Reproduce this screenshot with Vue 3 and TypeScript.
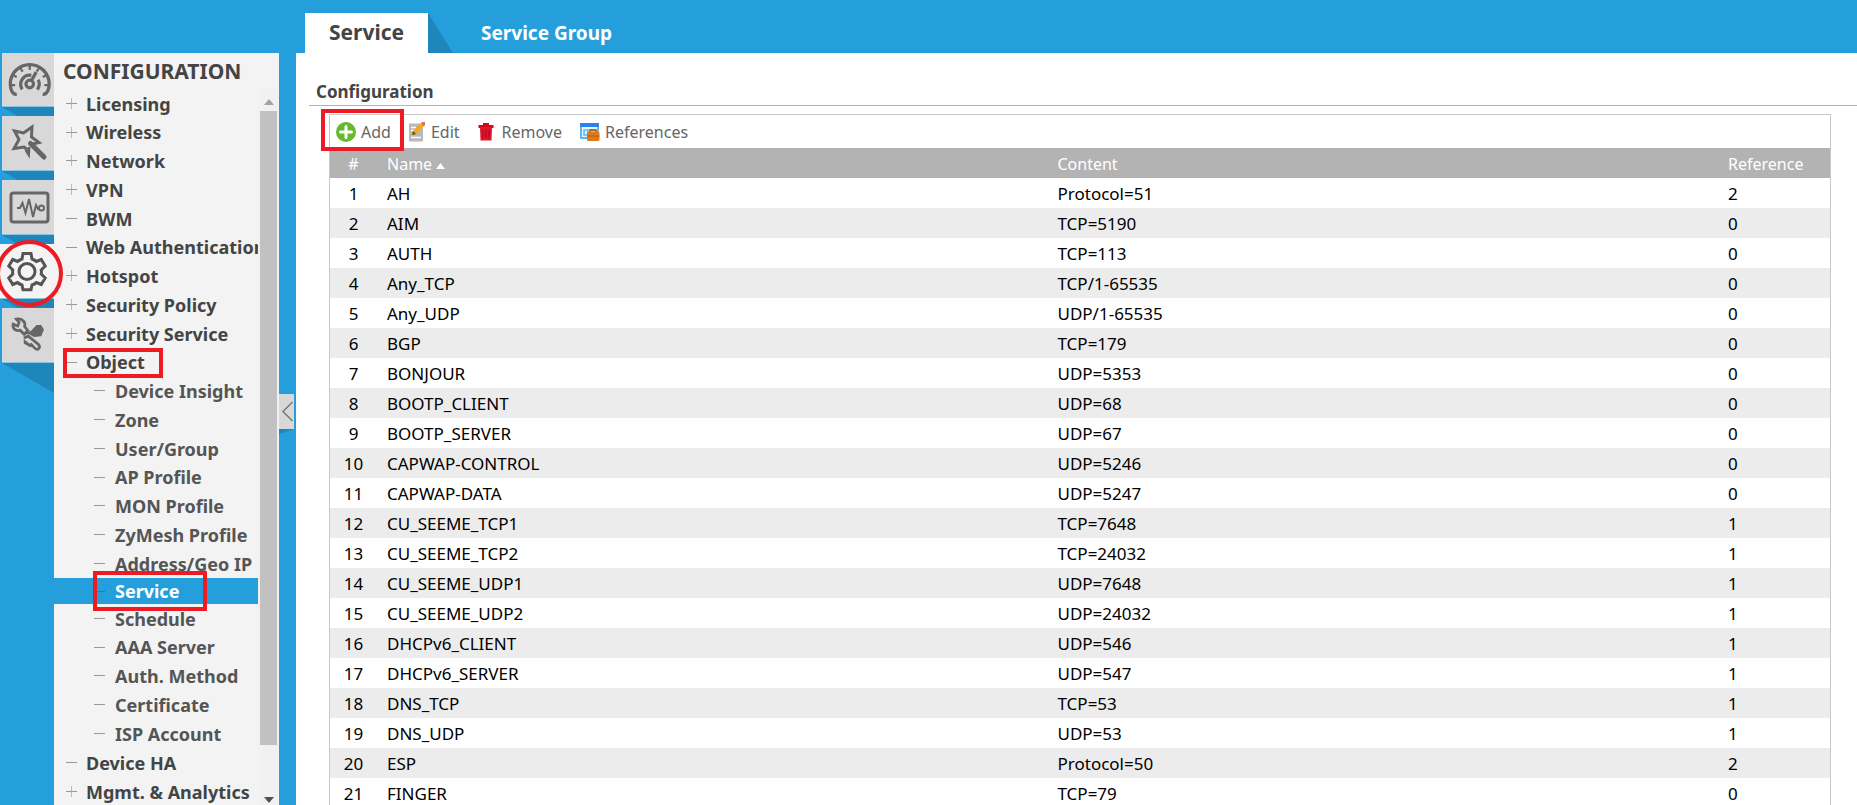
<script setup lang="ts">
import { ref } from 'vue'

interface NavItem {
  label: string
  sign: 'plus' | 'minus'
  marked?: boolean
  children?: string[]
}

interface ServiceRow {
  name: string
  content: string
  reference: number
}

const sections = ['Dashboard', 'Quick Setup', 'Monitor', 'Configuration', 'Maintenance']
const activeSection = ref('Configuration')
const activeItem = ref('Service')

const nav: NavItem[] = [
  { label: 'Licensing', sign: 'plus' },
  { label: 'Wireless', sign: 'plus' },
  { label: 'Network', sign: 'plus' },
  { label: 'VPN', sign: 'plus' },
  { label: 'BWM', sign: 'minus' },
  { label: 'Web Authentication', sign: 'minus' },
  { label: 'Hotspot', sign: 'plus' },
  { label: 'Security Policy', sign: 'plus' },
  { label: 'Security Service', sign: 'plus' },
  {
    label: 'Object',
    sign: 'minus',
    marked: true,
    children: [
      'Device Insight', 'Zone', 'User/Group', 'AP Profile', 'MON Profile', 'ZyMesh Profile',
      'Address/Geo IP', 'Service', 'Schedule', 'AAA Server', 'Auth. Method', 'Certificate', 'ISP Account',
    ],
  },
  { label: 'Device HA', sign: 'minus' },
  { label: 'Mgmt. & Analytics', sign: 'plus' },
]

const rows: ServiceRow[] = [
  { name: 'AH', content: 'Protocol=51', reference: 2 },
  { name: 'AIM', content: 'TCP=5190', reference: 0 },
  { name: 'AUTH', content: 'TCP=113', reference: 0 },
  { name: 'Any_TCP', content: 'TCP/1-65535', reference: 0 },
  { name: 'Any_UDP', content: 'UDP/1-65535', reference: 0 },
  { name: 'BGP', content: 'TCP=179', reference: 0 },
  { name: 'BONJOUR', content: 'UDP=5353', reference: 0 },
  { name: 'BOOTP_CLIENT', content: 'UDP=68', reference: 0 },
  { name: 'BOOTP_SERVER', content: 'UDP=67', reference: 0 },
  { name: 'CAPWAP-CONTROL', content: 'UDP=5246', reference: 0 },
  { name: 'CAPWAP-DATA', content: 'UDP=5247', reference: 0 },
  { name: 'CU_SEEME_TCP1', content: 'TCP=7648', reference: 1 },
  { name: 'CU_SEEME_TCP2', content: 'TCP=24032', reference: 1 },
  { name: 'CU_SEEME_UDP1', content: 'UDP=7648', reference: 1 },
  { name: 'CU_SEEME_UDP2', content: 'UDP=24032', reference: 1 },
  { name: 'DHCPv6_CLIENT', content: 'UDP=546', reference: 1 },
  { name: 'DHCPv6_SERVER', content: 'UDP=547', reference: 1 },
  { name: 'DNS_TCP', content: 'TCP=53', reference: 1 },
  { name: 'DNS_UDP', content: 'UDP=53', reference: 1 },
  { name: 'ESP', content: 'Protocol=50', reference: 2 },
  { name: 'FINGER', content: 'TCP=79', reference: 0 },
]
</script>

<template>
  <div class="shell">
    <nav class="rail" aria-label="Sections">
      <div v-for="s in sections" :key="s" class="slot">
        <button
          type="button"
          class="section"
          :class="{ current: s === activeSection }"
          :aria-label="s"
          @click="activeSection = s"
        >
          <svg v-if="s === 'Dashboard'" class="glyph" viewBox="0 0 44 44">
            <g transform="translate(-1.500 -1) scale(1.080)">
              <path d="M9.500 34.500C5 35 3.500 29 3.500 25a18 18 0 0 1 36 0c0 4-1.500 10-6 9.500" class="line thick" />
              <path d="M21.500 8v4M13 10.500l2 3M30 10.500l-2 3M6 17l3.500 1.500M37 17l-3.500 1.500M4 26h4M39 26h-4" class="line" />
              <path d="M14.500 30a8.500 8.500 0 0 1 8.500-13M28.500 30a8.500 8.500 0 0 0 .8-9" class="line thick" />
              <circle cx="21.500" cy="25" r="3.500" class="line thick" />
              <path d="M23 22l4.500-8" class="line thick" />
            </g>
          </svg>
          <svg v-else-if="s === 'Quick Setup'" class="glyph" viewBox="0 0 44 44">
            <path d="M19 28.500L16 26l-10 1.500 5-9L6.500 10l9 2L24 6l-.5 10 7.500 5.500-6 1.500" class="line thick" />
            <path d="M18 29l2.500 4 .5-7" class="line thick" />
            <path d="M22.500 22.500L36 36" class="line handle" />
          </svg>
          <svg v-else-if="s === 'Monitor'" class="glyph" viewBox="0 0 44 44">
            <rect x="3" y="8" width="37" height="29" rx="2.500" class="line thick" />
            <path d="M9 23h3l2.500-5 3 10 3.500-14 4 18 3-12 2 4h2" class="line" />
            <circle cx="33.500" cy="23" r="2.500" class="line" />
          </svg>
          <svg v-else-if="s === 'Configuration'" class="glyph" viewBox="0 0 44 44">
            <path d="M18 4.500h8l1 5.500q2.500.8 4.500 2.500l4.700-2 4 6.500-4 4q.5 2 0 4l4 4-4 6.500-4.700-2q-2 1.700-4.500 2.500l-1 4.800h-8l-1-4.800q-2.500-.8-4.500-2.500l-4.700 2-4-6.500 4-4q-.5-2 0-4l-4-4 4-6.500 4.700 2q2-1.700 4.500-2.500z" class="line thick" />
            <circle cx="22" cy="22.500" r="8" class="line thick" />
          </svg>
          <svg v-else class="glyph" viewBox="0 0 44 44">
            <g transform="translate(1 2) scale(.920)">
              <path d="M8 4.500L11 8l-1.500 4L4.500 10c-1 5 3 8 7.500 6.500l4.500 4.500 4-4-3.500-4.500C18.500 8 14 3 8 4.500z" class="line thick" />
              <path d="M16 21l8-4 6-6h5l3 5-3 7-8 1-5-3z" class="solid" />
              <path d="M16 25l5-2 11 9c3 4-1 7-4 4l-5-5" class="line thick" />
              <path d="M16 26l10 8-3 1-7-4z" class="solid" />
            </g>
          </svg>
        </button>
        <svg
          class="drop"
          :class="{ last: s === 'Maintenance' }"
          viewBox="0 0 52 30"
          preserveAspectRatio="xMinYMin slice"
        >
          <polygon points="0,0 52,0 52,30" />
        </svg>
        <span v-if="s === 'Configuration'" class="ring"></span>
      </div>
    </nav>

    <aside class="side">
      <h1 class="side-title">CONFIGURATION</h1>
      <div class="side-body">
        <ul class="tree">
          <li v-for="item in nav" :key="item.label">
            <div class="row">
              <i class="sign" :class="item.sign"></i>
              <a href="#">{{ item.label }}</a>
              <span v-if="item.marked" class="mark mark-object"></span>
            </div>
            <ul v-if="item.children" class="branch">
              <li
                v-for="child in item.children"
                :key="child"
                class="row"
                :class="{ active: child === activeItem }"
              >
                <i class="sign minus"></i>
                <a href="#" @click.prevent="activeItem = child">{{ child }}</a>
                <span v-if="child === 'Service'" class="mark mark-service"></span>
              </li>
            </ul>
          </li>
        </ul>
        <div class="scroll">
          <svg class="arrow" viewBox="0 0 10 6"><path d="M0 6L5 0l5 6z" fill="#a3a3a3" /></svg>
          <div class="thumb"></div>
          <svg class="arrow" viewBox="0 0 10 6"><path d="M0 0h10L5 6z" fill="#505050" /></svg>
        </div>
      </div>
    </aside>

    <div class="gutter">
      <button type="button" class="collapse" aria-label="Collapse menu">
        <svg viewBox="0 0 15 35"><path d="M13.500 8L4 17.500 13.500 27" fill="none" stroke="#777" stroke-width="1.500" /></svg>
      </button>
      <svg class="fold" viewBox="0 0 15 5"><polygon points="0,0 15,0 0,5" /></svg>
    </div>

    <main class="main">
      <div class="tabs">
        <button type="button" class="tab on">Service</button>
        <svg class="slope" viewBox="0 0 25 40"><polygon points="0,0 25,40 0,40" /></svg>
        <button type="button" class="tab">Service Group</button>
      </div>
      <div class="content">
        <h2 class="heading">Configuration</h2>
        <div class="panel">
          <div class="toolbar">
            <button type="button" class="tool">
              <svg width="20" height="20" viewBox="0 0 20 20">
                <circle cx="10" cy="10" r="10" fill="#64b92d" />
                <path d="M10 4.500v11M4.500 10h11" stroke="#fff" stroke-width="3" stroke-linecap="round" />
              </svg>
              <span>Add</span>
              <span class="mark mark-add"></span>
            </button>
            <button type="button" class="tool edit">
              <svg width="18" height="20" viewBox="0 0 18 20">
                <rect x="1" y="1.500" width="14" height="18" fill="#b9b9b9" />
                <path d="M3 5.500h5M3 8.500h3M3 15.500h10" stroke="#fff" stroke-width="1.500" />
                <path d="M4 13l1-4L13 1l3 3-8 8z" fill="#f5a81c" />
                <path d="M13 1l1.500-1H17v3l-1.200 1.200z" fill="#d86a70" />
                <path d="M4 13l1-4 3 3z" fill="#6b4a25" />
              </svg>
              <span>Edit</span>
            </button>
            <button type="button" class="tool remove">
              <svg width="16" height="20" viewBox="0 0 16 20">
                <path d="M5 1h6v2h4.500v3H.5V3H5z" fill="#d3081c" />
                <path d="M2 5h12l-.5 13.500h-11z" fill="#e2142a" />
                <path d="M5 8v8M8 8v8M11 8v8" stroke="#a50617" stroke-width="1" />
              </svg>
              <span>Remove</span>
            </button>
            <button type="button" class="tool refs">
              <svg width="20" height="20" viewBox="0 0 20 20">
                <rect x="1" y="2" width="17" height="14" fill="#e8f5ff" stroke="#5cb8ea" stroke-width="2" />
                <rect y="1" width="19" height="4" fill="#2c80f0" />
                <path d="M4 8h4v5H4zM10 8h5" fill="none" stroke="#5cb8ea" stroke-width="1.500" />
                <path d="M10 10V8h6v2" fill="none" stroke="#96500f" stroke-width="1.500" />
                <rect x="7" y="9.500" width="12.500" height="9.500" rx="1.500" fill="#dd7b1c" />
                <path d="M7 14h12.500" stroke="#b45d10" />
              </svg>
              <span>References</span>
            </button>
          </div>
          <table class="grid">
            <colgroup>
              <col class="c-num" />
              <col />
              <col />
              <col class="c-ref" />
            </colgroup>
            <thead>
              <tr>
                <th scope="col">#</th>
                <th scope="col">
                  Name
                  <svg class="sort" viewBox="0 0 9 6"><path d="M0 6l4.500-6L9 6z" fill="#fff" /></svg>
                </th>
                <th scope="col">Content</th>
                <th scope="col">Reference</th>
              </tr>
            </thead>
            <tbody>
              <tr v-for="(r, i) in rows" :key="r.name">
                <td>{{ i + 1 }}</td>
                <td>{{ r.name }}</td>
                <td>{{ r.content }}</td>
                <td>{{ r.reference }}</td>
              </tr>
            </tbody>
          </table>
        </div>
      </div>
    </main>
  </div>
</template>

<style>
body {
  margin: 0;
  overflow: hidden;
}
</style>

<style scoped>
.shell {
  display: flex;
  height: 100vh;
  overflow: hidden;
  background: #259fdc;
  color: #444;
  font-family: Tahoma, "Noto Sans", sans-serif;
  font-size: 17px;
}
button {
  border: 0;
  margin: 0;
  padding: 0;
  background: none;
  font: inherit;
  color: inherit;
}
svg {
  display: block;
  flex: none;
}
ul {
  list-style: none;
  margin: 0;
  padding: 0;
}

/* icon rail */
.rail {
  flex: 0 0 54px;
  padding-top: 53px;
  position: relative;
  z-index: 2;
}
.slot {
  position: relative;
  height: 64px;
}
.section {
  display: flex;
  align-items: center;
  justify-content: center;
  box-sizing: border-box;
  width: 52px;
  height: 55px;
  margin-left: 2px;
  padding-left: 4px;
  background: #d8d8d8;
  border-bottom: 1px solid #8ac4e2;
  color: #666;
}
.slot:first-child {
  height: 63px;
}
.slot:first-child .section {
  height: 54px;
}
.section.current {
  width: 54px;
  margin-left: 0;
  padding-left: 0;
  background: #f4f4f4;
  color: #555;
}
.glyph {
  width: 44px;
  height: 44px;
  overflow: visible;
}
.line {
  fill: none;
  stroke: currentColor;
  stroke-width: 2;
}
.thick {
  stroke-width: 3;
}
.handle {
  stroke-width: 5;
  stroke-linecap: round;
}
.solid {
  fill: currentColor;
}
.drop {
  width: 52px;
  height: 9px;
  margin-left: 2px;
  fill: #1f86bc;
}
.drop.last {
  height: 30px;
}
.ring {
  position: absolute;
  box-sizing: border-box;
  left: -4px;
  top: -4px;
  width: 67px;
  height: 67px;
  border: 4px solid #ed1c24;
  border-radius: 50%;
  pointer-events: none;
  z-index: 1;
}

/* sidebar */
.side {
  flex: 0 0 225px;
  min-width: 0;
  display: flex;
  flex-direction: column;
  margin-top: 53px;
  background: #f3f3f3;
  font-size: 18px;
  font-weight: 700;
}
.side-title {
  margin: 0;
  padding-left: 9px;
  font-size: 21px;
  line-height: 36px;
}
.side-body {
  flex: 1;
  min-height: 0;
  display: flex;
}
.tree {
  flex: 1;
  min-width: 0;
  overflow: hidden;
}
.row {
  position: relative;
  display: flex;
  align-items: center;
  height: 29px;
  padding-left: 12px;
  white-space: nowrap;
}
.tree > li:nth-child(4n + 2) > .row,
.branch > .row:nth-child(6n + 4) {
  height: 28px;
}
.row a {
  color: #444;
  text-decoration: none;
}
.branch .row {
  padding-left: 40px;
}
.branch .row a {
  color: #555;
}
.branch .row.active {
  height: 26px;
  background: #259fdc;
}
.branch .row.active a {
  color: #fff;
}
.sign {
  flex: none;
  width: 11px;
  height: 11px;
  margin-right: 9px;
  background: linear-gradient(#999, #999) center / 11px 1px no-repeat;
}
.sign.plus {
  background:
    linear-gradient(#999, #999) center / 11px 1px no-repeat,
    linear-gradient(#bbb, #bbb) center / 1px 11px no-repeat;
}
.active .sign {
  background: linear-gradient(#1f7fb2, #1f7fb2) center / 11px 1px no-repeat;
}
.branch .sign {
  margin-right: 10px;
}
.mark {
  position: absolute;
  box-sizing: border-box;
  border: 4px solid #ed1c24;
  pointer-events: none;
  z-index: 1;
}
.mark-object {
  left: 9px;
  top: 0;
  width: 100px;
  height: 30px;
}
.mark-service {
  left: 39px;
  top: -7px;
  width: 114px;
  height: 40px;
}
.scroll {
  flex: 0 0 21px;
  display: flex;
  flex-direction: column;
  align-items: center;
  justify-content: space-between;
  padding: 10px 0 2px;
  box-sizing: border-box;
  background: #f1f1f1;
}
.arrow {
  width: 10px;
  height: 6px;
}
.thumb {
  width: 17px;
  flex: 0 0 90%;
  margin-bottom: auto;
  margin-top: 6px;
  background: #c1c1c1;
}

/* gutter with collapse handle */
.gutter {
  flex: 0 0 17px;
  display: flex;
  flex-direction: column;
  padding-top: 394px;
}
.collapse {
  width: 15px;
  height: 35px;
  background: #d8d8d8;
}
.fold {
  width: 15px;
  height: 5px;
  fill: #1f86bc;
}

/* main */
.main {
  flex: 1;
  min-width: 0;
  display: flex;
  flex-direction: column;
}
.tabs {
  flex: 0 0 53px;
  display: flex;
  align-items: flex-end;
  padding-left: 9px;
}
.tab {
  height: 40px;
  color: #fff;
  font-size: 19px;
  font-weight: 700;
}
.tab.on {
  width: 123px;
  padding-bottom: 2px;
  background: #fff;
  color: #444;
  font-size: 21px;
}
.slope {
  width: 25px;
  height: 40px;
  margin-right: 28px;
  fill: #1f86bc;
}
.content {
  flex: 1;
  min-height: 0;
  overflow: hidden;
  background: #fff;
  padding: 25px 0 0 13px;
}
.heading {
  margin: 0;
  padding: 0 0 0 7px;
  font-size: 17px;
  line-height: 27px;
  border-bottom: 1px solid #b3b3b3;
}
.panel {
  margin: 8px 26px 0 20px;
  border: 1px solid #c8c8c8;
}
.toolbar {
  display: flex;
  align-items: center;
  height: 33px;
  padding-left: 6px;
  color: #666;
}
.tool {
  position: relative;
  display: flex;
  align-items: center;
  gap: 5px;
  font-size: 16px;
}
.edit {
  margin-left: 17px;
}
.remove {
  margin-left: 18px;
  gap: 8px;
}
.refs {
  margin-left: 18px;
}
.mark-add {
  left: -15px;
  top: -12px;
  width: 83px;
  height: 42px;
}
.grid {
  width: 100%;
  table-layout: fixed;
  border-collapse: collapse;
}
.c-num {
  width: 47px;
}
.c-ref {
  width: 112px;
}
.grid th,
.grid td {
  box-sizing: border-box;
  height: 30px;
  padding: 2px 0 0 10px;
  text-align: left;
  line-height: 22px;
  white-space: nowrap;
}
.grid th:first-child,
.grid td:first-child {
  padding-left: 0;
  text-align: center;
}
.grid th {
  background: #b3b3b3;
  color: #fff;
  font-size: 16px;
  font-weight: 400;
}
.grid td {
  color: #000;
}
.grid tbody tr:nth-child(even) {
  background: #ececec;
}
.sort {
  display: inline-block;
  width: 9px;
  height: 6px;
  vertical-align: middle;
}
</style>
